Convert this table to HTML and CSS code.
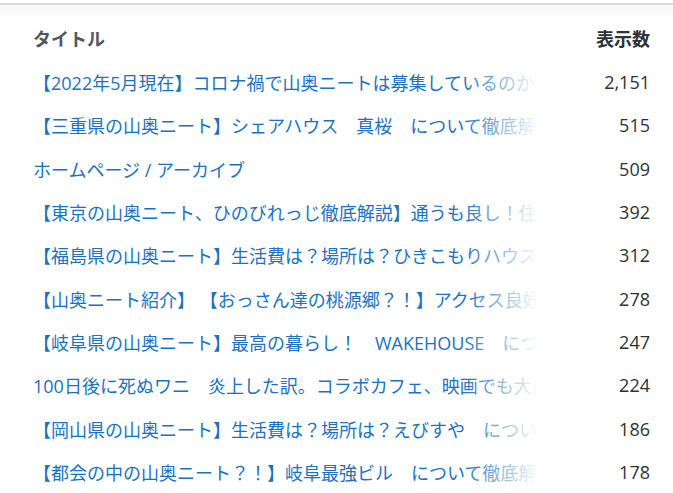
FILE: index.html
```html
<!DOCTYPE html>
<html lang="ja">
<head>
<meta charset="utf-8">
<title>表示数</title>
<link rel="stylesheet" href="styles.css">
</head>
<body>
<div class="panel">
  <div class="table">
    <div class="head title">タイトル</div>
    <div class="head count">表示数</div>

    <div class="cell title"><a href="#">【2022年5月現在】コロナ禍で山奥ニートは募集しているのか？</a></div>
    <div class="cell count">2,151</div>

    <div class="cell title"><a href="#">【三重県の山奥ニート】シェアハウス　真桜　について徹底解説</a></div>
    <div class="cell count">515</div>

    <div class="cell title"><a href="#">ホームページ / アーカイブ</a></div>
    <div class="cell count">509</div>

    <div class="cell title"><a href="#">【東京の山奥ニート、ひのびれっじ徹底解説】通うも良し！住むも良し！</a></div>
    <div class="cell count">392</div>

    <div class="cell title"><a href="#">【福島県の山奥ニート】生活費は？場所は？ひきこもりハウス</a></div>
    <div class="cell count">312</div>

    <div class="cell title"><a href="#">【山奥ニート紹介】 【おっさん達の桃源郷？！】アクセス良好</a></div>
    <div class="cell count">278</div>

    <div class="cell title"><a href="#">【岐阜県の山奥ニート】最高の暮らし！　WAKEHOUSE　について</a></div>
    <div class="cell count">247</div>

    <div class="cell title"><a href="#">100日後に死ぬワニ　炎上した訳。コラボカフェ、映画でも大炎上</a></div>
    <div class="cell count">224</div>

    <div class="cell title"><a href="#">【岡山県の山奥ニート】生活費は？場所は？えびすや　について</a></div>
    <div class="cell count">186</div>

    <div class="cell title"><a href="#">【都会の中の山奥ニート？！】岐阜最強ビル　について徹底解説</a></div>
    <div class="cell count">178</div>
  </div>
</div>
</body>
</html>
```
FILE: styles.css
```css
html, body {
  margin: 0;
  padding: 0;
  background: #ffffff;
}

body {
  font-family: "Open Sans", "Noto Sans CJK JP", sans-serif;
  font-size: 18px;
}

.panel {
  margin-top: 3px;
  border-top: 2px solid #dcdcde;
  background: linear-gradient(#f6f6f6, #ffffff 14px);
  padding: 11px 23px 0 33px;
}

.table {
  display: grid;
  grid-template-columns: 510px 1fr;
  grid-template-rows: 44.33px;
  grid-auto-rows: 43.33px;
  align-items: center;
}

.head {
  font-weight: bold;
  color: #50575e;
}

.title {
  position: relative;
  white-space: nowrap;
  overflow: hidden;
}

.cell.title::after {
  content: "";
  position: absolute;
  top: 0;
  right: 0;
  bottom: 0;
  width: 80px;
  background: linear-gradient(to right, rgba(255,255,255,0), #ffffff 95%);
}

.title a {
  color: #1b72c0;
  text-decoration: none;
}

.count {
  text-align: right;
  color: #2c3338;
}
```
